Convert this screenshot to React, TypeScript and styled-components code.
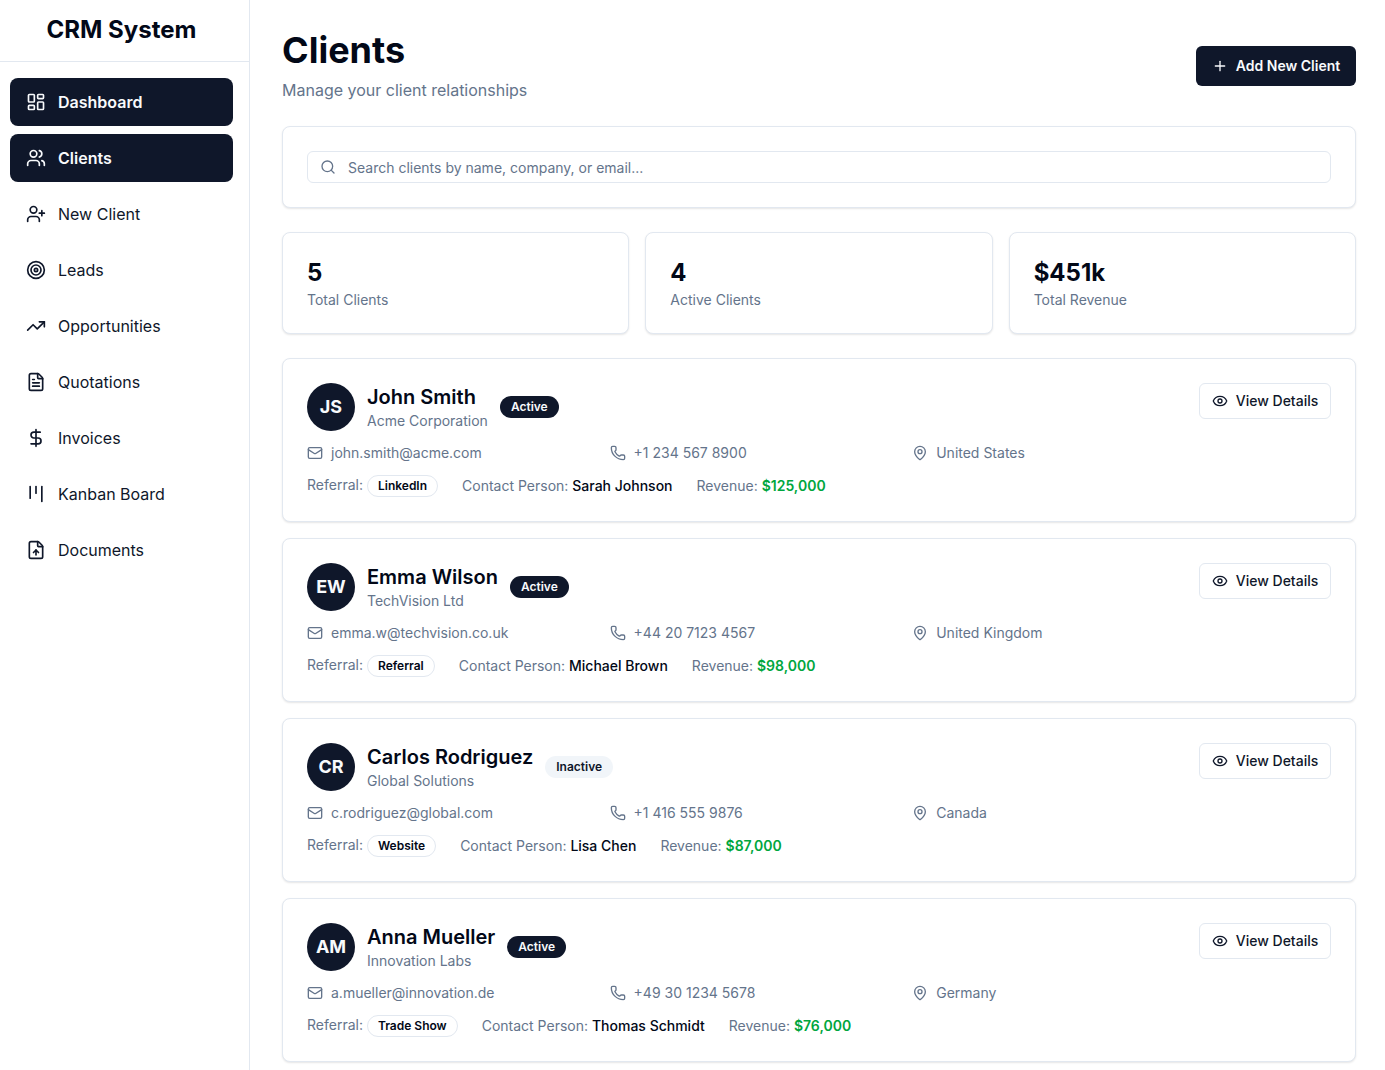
import React from "react";
import styled, { createGlobalStyle } from "styled-components";
import {
  LayoutDashboard, Users, UserPlus, Target, TrendingUp, FileText, DollarSign,
  Kanban, FileUp, Search, Plus, Mail, Phone, MapPin, Eye,
} from "lucide-react";

const Global = createGlobalStyle`
  * { box-sizing: border-box; }
  html, body { margin: 0; padding: 0; background: #fff; }
  body { font-family: Inter, "Liberation Sans", sans-serif; color: #020817; }
`;

const Shell = styled.div`
  display: flex;
  min-height: 1070px;
  width: 1385px;
`;

const Sidebar = styled.aside`
  width: 250px;
  flex: none;
  border-right: 1px solid #e2e8f0;
  background: #fff;
`;

const Brand = styled.div`
  height: 62px;
  border-bottom: 1px solid #e2e8f0;
  padding: 0 6px 2px 0;
  display: flex;
  align-items: center;
  justify-content: center;
  font-size: 24px;
  line-height: 32px;
  font-weight: 700;
`;

const Nav = styled.nav`
  display: flex;
  flex-direction: column;
  gap: 8px;
  padding: 16px 16px 0 10px;
`;

const NavItem = styled.a<{ $active?: boolean }>`
  height: 48px;
  display: flex;
  align-items: center;
  gap: 12px;
  padding: 0 16px;
  border-radius: 8px;
  font-size: 16px;
  font-weight: ${(p) => (p.$active ? 600 : 400)};
  background: ${(p) => (p.$active ? "#0f172a" : "transparent")};
  color: ${(p) => (p.$active ? "#f8fafc" : "#0f172a")};
`;

const Main = styled.main`
  flex: 1;
  min-width: 0;
  padding: 24px 29px 8px 32px;
  display: flex;
  flex-direction: column;
  gap: 16px;
`;

const Header = styled.header`
  display: flex;
  align-items: flex-start;
  justify-content: space-between;
  margin-bottom: 8px;
`;

const Title = styled.h1`
  margin: 6px 0 8px;
  font-size: 36px;
  line-height: 40px;
  font-weight: 700;
`;

const Subtitle = styled.p`
  margin: 0;
  font-size: 16px;
  line-height: 24px;
  color: #64748b;
`;

const PrimaryButton = styled.button`
  height: 40px;
  width: 160px;
  margin-top: 22px;
  display: flex;
  align-items: center;
  justify-content: center;
  gap: 8px;
  border: 0;
  border-radius: 6px;
  background: #0f172a;
  color: #f8fafc;
  font: 600 14px/20px Inter, sans-serif;
`;

const Card = styled.section`
  background: #fff;
  border: 1px solid #e2e8f0;
  border-radius: 8px;
  box-shadow: 0 1px 2px rgba(0, 0, 0, 0.1);
  padding: 24px;
`;

const SearchCard = styled(Card)`
  margin-bottom: 8px;
`;

const SearchBox = styled.div`
  height: 32px;
  border: 1px solid #e2e8f0;
  border-radius: 6px;
  display: flex;
  align-items: center;
  gap: 12px;
  padding-left: 12px;
  font-size: 14px;
  color: #64748b;
`;

const Stats = styled.div`
  display: grid;
  grid-template-columns: repeat(3, 1fr);
  gap: 16px;
  margin-bottom: 8px;
`;

const StatCard = styled(Card)`
  padding: 24px 24px 23px;
`;

const StatValue = styled.div`
  font-size: 24px;
  line-height: 32px;
  font-weight: 700;
  margin-bottom: 1px;
`;

const StatLabel = styled.div`
  font-size: 14px;
  line-height: 20px;
  color: #64748b;
`;

const ClientCard = styled(Card)`
  padding-bottom: 23px;
`;

const ClientTop = styled.div`
  display: flex;
  justify-content: space-between;
  align-items: flex-start;
`;

const Identity = styled.div`
  display: flex;
  align-items: center;
  gap: 12px;
`;

const Avatar = styled.div`
  width: 48px;
  height: 48px;
  border-radius: 50%;
  background: #0f172a;
  color: #f8fafc;
  display: flex;
  align-items: center;
  justify-content: center;
  font-size: 18px;
  line-height: 28px;
  font-weight: 700;
`;

const Name = styled.div`
  font-size: 20px;
  line-height: 28px;
  font-weight: 600;
`;

const Company = styled.div`
  font-size: 14px;
  line-height: 20px;
  color: #64748b;
`;

const StatusBadge = styled.span<{ $active: boolean }>`
  height: 22px;
  padding: 0 11px;
  border-radius: 999px;
  display: inline-flex;
  align-items: center;
  font-size: 12px;
  line-height: 16px;
  font-weight: 600;
  background: ${(p) => (p.$active ? "#0f172a" : "#f1f5f9")};
  color: ${(p) => (p.$active ? "#f8fafc" : "#0f172a")};
`;

const OutlineButton = styled.button`
  width: 132px;
  height: 36px;
  display: flex;
  align-items: center;
  justify-content: center;
  gap: 8px;
  background: #fff;
  border: 1px solid #e2e8f0;
  border-radius: 6px;
  color: #0f172a;
  font: 500 14px/20px Inter, sans-serif;
`;

const ContactGrid = styled.div`
  display: grid;
  grid-template-columns: repeat(3, 302.6px);
  margin-top: 10px;
`;

const Contact = styled.div`
  display: flex;
  align-items: center;
  gap: 8px;
  font-size: 14px;
  line-height: 24px;
  color: #64748b;
`;

const MetaRow = styled.div`
  display: flex;
  align-items: center;
  gap: 24px;
  margin-top: 9px;
  font-size: 14px;
  line-height: 24px;
  color: #64748b;
`;

const Referral = styled.div`
  display: flex;
  align-items: center;
  gap: 4px;
`;

const ReferralLabel = styled.span`
  position: relative;
  top: -1px;
`;

const ReferralBadge = styled.span`
  height: 22px;
  padding: 0 10px;
  border: 1px solid #e2e8f0;
  border-radius: 999px;
  display: inline-flex;
  align-items: center;
  font-size: 12px;
  font-weight: 600;
  color: #020817;
`;

const Strong = styled.span`
  color: #020817;
  font-weight: 500;
`;

const Money = styled.span`
  color: #00a63e;
  font-weight: 600;
`;

const navItems = [
  { label: "Dashboard", Icon: LayoutDashboard, active: true },
  { label: "Clients", Icon: Users, active: true },
  { label: "New Client", Icon: UserPlus },
  { label: "Leads", Icon: Target },
  { label: "Opportunities", Icon: TrendingUp },
  { label: "Quotations", Icon: FileText },
  { label: "Invoices", Icon: DollarSign },
  { label: "Kanban Board", Icon: Kanban },
  { label: "Documents", Icon: FileUp },
];

const stats = [
  { value: "5", label: "Total Clients" },
  { value: "4", label: "Active Clients" },
  { value: "$451k", label: "Total Revenue" },
];

const clients = [
  { initials: "JS", name: "John Smith", company: "Acme Corporation", active: true, email: "john.smith@acme.com", phone: "+1 234 567 8900", country: "United States", referral: "LinkedIn", contact: "Sarah Johnson", revenue: "$125,000" },
  { initials: "EW", name: "Emma Wilson", company: "TechVision Ltd", active: true, email: "emma.w@techvision.co.uk", phone: "+44 20 7123 4567", country: "United Kingdom", referral: "Referral", contact: "Michael Brown", revenue: "$98,000" },
  { initials: "CR", name: "Carlos Rodriguez", company: "Global Solutions", active: false, email: "c.rodriguez@global.com", phone: "+1 416 555 9876", country: "Canada", referral: "Website", contact: "Lisa Chen", revenue: "$87,000" },
  { initials: "AM", name: "Anna Mueller", company: "Innovation Labs", active: true, email: "a.mueller@innovation.de", phone: "+49 30 1234 5678", country: "Germany", referral: "Trade Show", contact: "Thomas Schmidt", revenue: "$76,000" },
];

export default function App() {
  return (
    <Shell>
      <Global />
      <Sidebar>
        <Brand>CRM System</Brand>
        <Nav>
          {navItems.map(({ label, Icon, active }) => (
            <NavItem key={label} $active={active}>
              <Icon size={20} />
              {label}
            </NavItem>
          ))}
        </Nav>
      </Sidebar>
      <Main>
        <Header>
          <div>
            <Title>Clients</Title>
            <Subtitle>Manage your client relationships</Subtitle>
          </div>
          <PrimaryButton>
            <Plus size={16} />
            Add New Client
          </PrimaryButton>
        </Header>
        <SearchCard>
          <SearchBox>
            <Search size={16} />
            Search clients by name, company, or email...
          </SearchBox>
        </SearchCard>
        <Stats>
          {stats.map((s) => (
            <StatCard key={s.label}>
              <StatValue>{s.value}</StatValue>
              <StatLabel>{s.label}</StatLabel>
            </StatCard>
          ))}
        </Stats>
        {clients.map((c) => (
          <ClientCard key={c.name}>
            <ClientTop>
              <Identity>
                <Avatar>{c.initials}</Avatar>
                <div>
                  <Name>{c.name}</Name>
                  <Company>{c.company}</Company>
                </div>
                <StatusBadge $active={c.active}>{c.active ? "Active" : "Inactive"}</StatusBadge>
              </Identity>
              <OutlineButton>
                <Eye size={16} />
                View Details
              </OutlineButton>
            </ClientTop>
            <ContactGrid>
              <Contact><Mail size={16} />{c.email}</Contact>
              <Contact><Phone size={16} />{c.phone}</Contact>
              <Contact><MapPin size={16} />{c.country}</Contact>
            </ContactGrid>
            <MetaRow>
              <Referral>
                <ReferralLabel>Referral:</ReferralLabel>
                <ReferralBadge>{c.referral}</ReferralBadge>
              </Referral>
              <span>Contact Person: <Strong>{c.contact}</Strong></span>
              <span>Revenue: <Money>{c.revenue}</Money></span>
            </MetaRow>
          </ClientCard>
        ))}
      </Main>
    </Shell>
  );
}
